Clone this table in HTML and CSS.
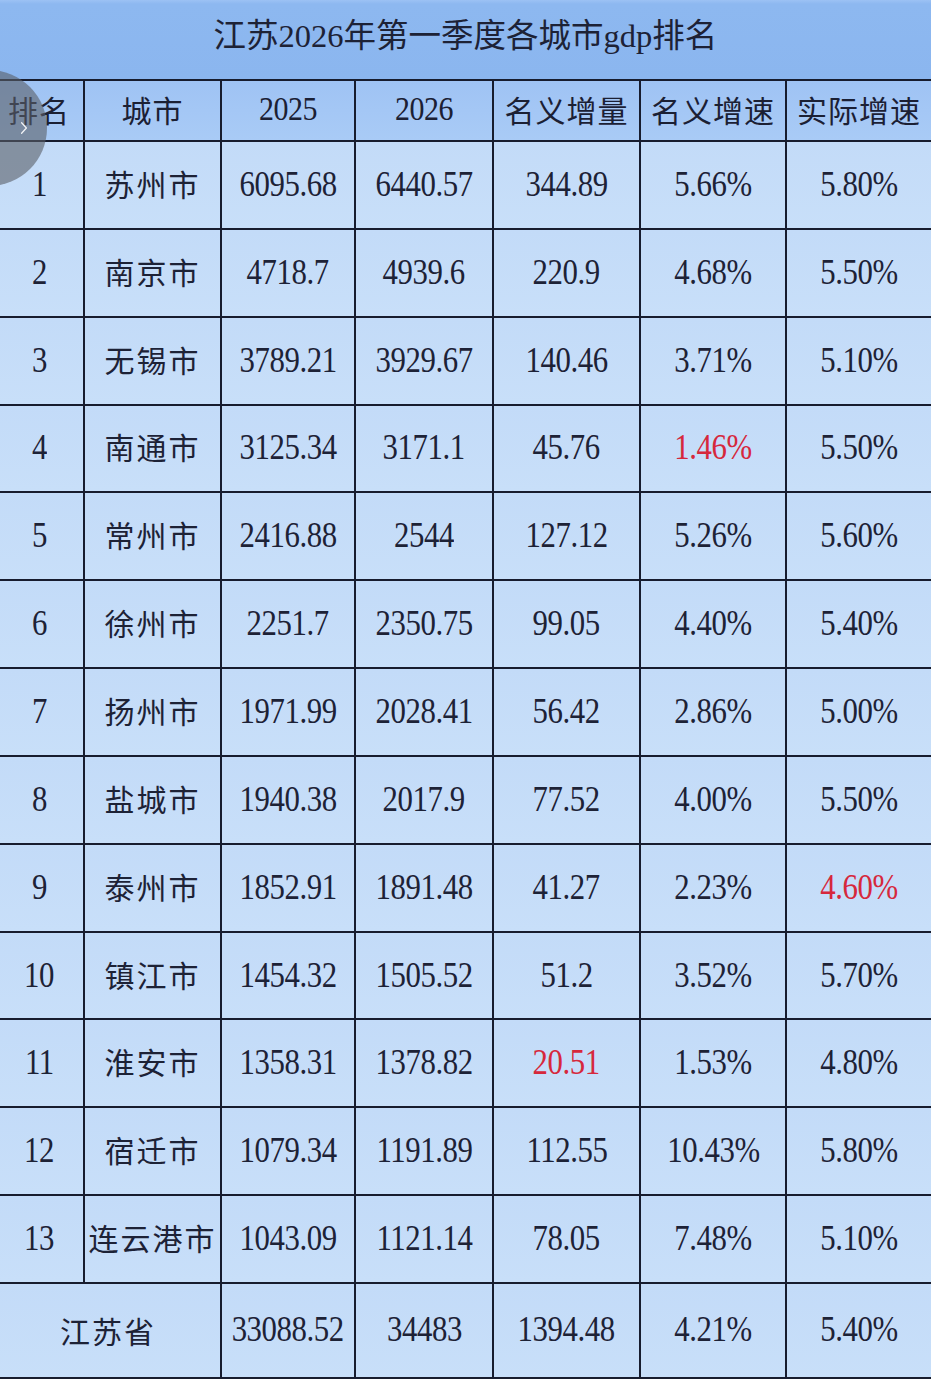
FILE: index.html
```html
<!DOCTYPE html>
<html lang="zh-CN">
<head>
<meta charset="utf-8">
<title>江苏2026年第一季度各城市gdp排名</title>
<link rel="stylesheet" href="styles.css">
</head>
<body>
<div class="sheet">
  <div class="title">江苏2026年第一季度各城市gdp排名</div>
  <div class="grid">
    <div class="th rank">排名</div><div class="th">城市</div><div class="th"><span class="n">2025</span></div><div class="th"><span class="n">2026</span></div><div class="th">名义增量</div><div class="th">名义增速</div><div class="th">实际增速</div>

    <div class="td rank"><span class="n">1</span></div><div class="td city">苏州市</div><div class="td"><span class="n">6095.68</span></div><div class="td"><span class="n">6440.57</span></div><div class="td"><span class="n">344.89</span></div><div class="td"><span class="n">5.66%</span></div><div class="td"><span class="n">5.80%</span></div>
    <div class="td rank"><span class="n">2</span></div><div class="td city">南京市</div><div class="td"><span class="n">4718.7</span></div><div class="td"><span class="n">4939.6</span></div><div class="td"><span class="n">220.9</span></div><div class="td"><span class="n">4.68%</span></div><div class="td"><span class="n">5.50%</span></div>
    <div class="td rank"><span class="n">3</span></div><div class="td city">无锡市</div><div class="td"><span class="n">3789.21</span></div><div class="td"><span class="n">3929.67</span></div><div class="td"><span class="n">140.46</span></div><div class="td"><span class="n">3.71%</span></div><div class="td"><span class="n">5.10%</span></div>
    <div class="td rank"><span class="n">4</span></div><div class="td city">南通市</div><div class="td"><span class="n">3125.34</span></div><div class="td"><span class="n">3171.1</span></div><div class="td"><span class="n">45.76</span></div><div class="td"><span class="n red">1.46%</span></div><div class="td"><span class="n">5.50%</span></div>
    <div class="td rank"><span class="n">5</span></div><div class="td city">常州市</div><div class="td"><span class="n">2416.88</span></div><div class="td"><span class="n">2544</span></div><div class="td"><span class="n">127.12</span></div><div class="td"><span class="n">5.26%</span></div><div class="td"><span class="n">5.60%</span></div>
    <div class="td rank"><span class="n">6</span></div><div class="td city">徐州市</div><div class="td"><span class="n">2251.7</span></div><div class="td"><span class="n">2350.75</span></div><div class="td"><span class="n">99.05</span></div><div class="td"><span class="n">4.40%</span></div><div class="td"><span class="n">5.40%</span></div>
    <div class="td rank"><span class="n">7</span></div><div class="td city">扬州市</div><div class="td"><span class="n">1971.99</span></div><div class="td"><span class="n">2028.41</span></div><div class="td"><span class="n">56.42</span></div><div class="td"><span class="n">2.86%</span></div><div class="td"><span class="n">5.00%</span></div>
    <div class="td rank"><span class="n">8</span></div><div class="td city">盐城市</div><div class="td"><span class="n">1940.38</span></div><div class="td"><span class="n">2017.9</span></div><div class="td"><span class="n">77.52</span></div><div class="td"><span class="n">4.00%</span></div><div class="td"><span class="n">5.50%</span></div>
    <div class="td rank"><span class="n">9</span></div><div class="td city">泰州市</div><div class="td"><span class="n">1852.91</span></div><div class="td"><span class="n">1891.48</span></div><div class="td"><span class="n">41.27</span></div><div class="td"><span class="n">2.23%</span></div><div class="td"><span class="n red">4.60%</span></div>
    <div class="td rank"><span class="n">10</span></div><div class="td city">镇江市</div><div class="td"><span class="n">1454.32</span></div><div class="td"><span class="n">1505.52</span></div><div class="td"><span class="n">51.2</span></div><div class="td"><span class="n">3.52%</span></div><div class="td"><span class="n">5.70%</span></div>
    <div class="td rank"><span class="n">11</span></div><div class="td city">淮安市</div><div class="td"><span class="n">1358.31</span></div><div class="td"><span class="n">1378.82</span></div><div class="td"><span class="n red">20.51</span></div><div class="td"><span class="n">1.53%</span></div><div class="td"><span class="n">4.80%</span></div>
    <div class="td rank"><span class="n">12</span></div><div class="td city">宿迁市</div><div class="td"><span class="n">1079.34</span></div><div class="td"><span class="n">1191.89</span></div><div class="td"><span class="n">112.55</span></div><div class="td"><span class="n">10.43%</span></div><div class="td"><span class="n">5.80%</span></div>
    <div class="td rank"><span class="n">13</span></div><div class="td city">连云港市</div><div class="td"><span class="n">1043.09</span></div><div class="td"><span class="n">1121.14</span></div><div class="td"><span class="n">78.05</span></div><div class="td"><span class="n">7.48%</span></div><div class="td"><span class="n">5.10%</span></div>

    <div class="td total-name">江苏省</div><div class="td total"><span class="n">33088.52</span></div><div class="td total"><span class="n">34483</span></div><div class="td total"><span class="n">1394.48</span></div><div class="td total"><span class="n">4.21%</span></div><div class="td total"><span class="n">5.40%</span></div>
  </div>
  <div class="swipe">
    <svg class="chev" viewBox="0 0 10 16" width="8" height="14"><path d="M2 1.5 L8 8 L2 14.5" fill="none" stroke="#ffffff" stroke-width="1.6" stroke-linecap="round" stroke-linejoin="round"/></svg>
  </div>
</div>
</body>
</html>
```

FILE: styles.css
```css
html, body {
  margin: 0;
  padding: 0;
  background: #ffffff;
}

body {
  width: 931px;
  height: 1380px;
  overflow: hidden;
  font-family: "Noto Serif CJK SC", "Liberation Serif", "Noto Sans CJK SC", serif;
  color: #1b2034;
}

.sheet {
  position: relative;
  width: 931px;
  background: #171c2e;
  padding-bottom: 2px;
}

.title {
  height: 79px;
  margin-bottom: 2px;
  background: linear-gradient(180deg, #9cc2f4 0px, #8db8f0 4px, #8bb6ef 100%);
  display: flex;
  align-items: center;
  justify-content: center;
  padding-bottom: 14px;
  box-sizing: border-box;
  font-family: "Liberation Serif", "Noto Sans CJK SC", serif;
  font-size: 32.5px;
  letter-spacing: 0;
  color: #1d2236;
}

.grid {
  display: grid;
  grid-template-columns: 83px 135px 132px 136px 145px 144px 144px;
  grid-template-rows: 59px repeat(13, 85.85px) 93px;
  gap: 2px;
}

.th, .td {
  display: flex;
  align-items: center;
  justify-content: center;
  font-family: "Liberation Serif", "Noto Sans CJK SC", serif;
}

.th {
  background: linear-gradient(180deg, #9fc3f4 0%, #a9cbf6 100%);
  font-size: 30px;
  letter-spacing: 1px;
  color: #1b2034;
  padding-bottom: 4px;
}

.td {
  background: linear-gradient(180deg, #c3dbf8 0%, #c8dff9 100%);
  font-size: 30px;
  color: #1d2236;
}

.rank {
  padding-right: 5px;
}

.city {
  font-size: 30px;
  letter-spacing: 2px;
  font-weight: 400;
  padding-bottom: 4px;
}

.n {
  display: inline-block;
  font-size: 35px;
  transform: scaleX(0.88);
  letter-spacing: -0.5px;
  white-space: nowrap;
}

.th .n {
  font-size: 34px;
}

.red {
  color: #d6283c;
}

.total-name {
  grid-column: span 2;
  justify-content: flex-start;
  padding-left: 60px;
  letter-spacing: 2px;
}

.swipe {
  position: absolute;
  left: -69px;
  top: 70px;
  width: 116px;
  height: 116px;
  border-radius: 50%;
  background: rgba(90, 95, 104, 0.6);
  display: flex;
  align-items: center;
  justify-content: flex-end;
  padding-right: 19px;
  box-sizing: border-box;
}

.chev {
  display: block;
  opacity: 0.9;
}
```
